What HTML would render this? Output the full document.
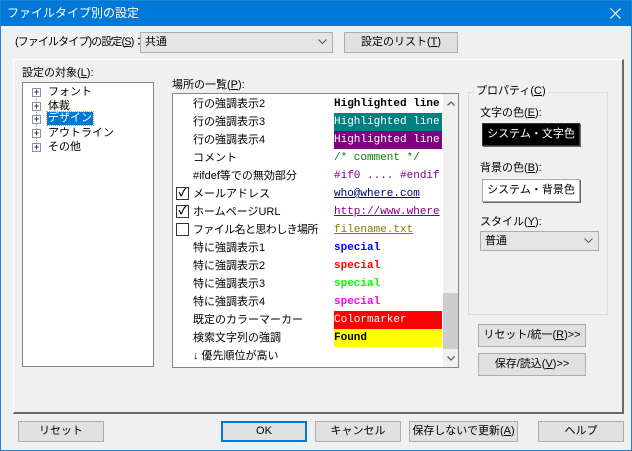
<!DOCTYPE html>
<html><head><meta charset="utf-8"><style>
*{box-sizing:border-box;margin:0;padding:0}
body{width:632px;height:451px;overflow:hidden;background:#f0f0f0;font-family:"Liberation Sans","Noto Sans CJK JP",sans-serif;font-size:11px;color:#000;position:relative}
.a{position:absolute;white-space:nowrap;line-height:14px}
.win{position:absolute;left:0;top:0;width:632px;height:451px;border:1px solid #1883d7}
.title{position:absolute;left:0;top:0;width:632px;height:26px;background:#0078d7;color:#fff;font-size:12px;line-height:26px;padding-left:7px}
.btn{position:absolute;background:#e1e1e1;border:1px solid #adadad;text-align:center;font-size:11px;white-space:nowrap;overflow:hidden}
.cb{position:absolute;width:13px;height:13px;border:1px solid #333;background:#fff;font-size:11px;line-height:11px;text-align:center;font-weight:bold}
.mono{font-family:"Liberation Mono",monospace;font-size:11px}
.pl{position:absolute;width:9px;height:9px;border:1px solid #919191;background:#fff;font-size:9px;line-height:7px;text-align:center;color:#1a3e8c;font-weight:bold}
.chev{position:absolute;right:5px;top:6px}
</style></head><body>
<div class="title">ファイルタイプ別の設定</div>
<svg style="position:absolute;left:610px;top:8px" width="11" height="11"><path d="M0.5 0.5L10.5 10.5M10.5 0.5L0.5 10.5" stroke="#fff" stroke-width="1.2"/></svg>
<div class="win"></div>

<div class="a" style="left:15px;top:35px;letter-spacing:-0.9px">(ファイルタイプ)の設定(<u>S</u>)：</div>
<div class="btn" style="left:140px;top:32px;width:193px;height:21px;background:#e5e5e5;text-align:left;padding-left:4px;line-height:19px">共通<svg class="chev" width="9" height="6"><path d="M0.5 0.5L4.5 4.5L8.5 0.5" fill="none" stroke="#555"/></svg></div>
<div class="btn" style="left:344px;top:32px;width:114px;height:21px;line-height:19px">設定のリスト(<u>T</u>)</div>

<div style="position:absolute;left:13px;top:59px;width:611px;height:355px;border-top:1px solid #fff;border-left:1px solid #fff;border-right:2px solid #696969;border-bottom:2px solid #696969"></div>

<div class="a" style="left:22px;top:66px">設定の対象(<u>L</u>):</div>
<div style="position:absolute;left:22px;top:82px;width:132px;height:285px;background:#fff;border:1px solid #828790"></div>
<div style="position:absolute;left:36px;top:95px;height:52px;border-left:1px dotted #a0a0a0"></div>
<div class="pl" style="left:32px;top:88px">+</div><div class="a" style="left:48px;top:85px">フォント</div>
<div class="pl" style="left:32px;top:102px">+</div><div class="a" style="left:48px;top:99px">体裁</div>
<div class="pl" style="left:32px;top:115px">+</div><div class="a" style="left:47px;top:112px;background:#0078d7;color:#fff;outline:1px dotted #f90;padding:0 1px;line-height:13px">デザイン</div>
<div class="pl" style="left:32px;top:129px">+</div><div class="a" style="left:48px;top:126px">アウトライン</div>
<div class="pl" style="left:32px;top:143px">+</div><div class="a" style="left:48px;top:140px">その他</div>

<div class="a" style="left:172px;top:78px">場所の一覧(<u>P</u>):</div>
<div style="position:absolute;left:172px;top:93px;width:287px;height:275px;background:#fff;border:1px solid #828790"></div>
<div style="position:absolute;left:443px;top:94px;width:15px;height:273px;background:#f0f0f0"></div>
<div style="position:absolute;left:443px;top:293px;width:15px;height:56px;background:#cdcdcd"></div>
<svg style="position:absolute;left:447px;top:101px" width="8" height="5"><path d="M0.5 4.5L4 1L7.5 4.5" fill="none" stroke="#606060" stroke-width="1.3"/></svg>
<svg style="position:absolute;left:447px;top:356px" width="8" height="5"><path d="M0.5 0.5L4 4L7.5 0.5" fill="none" stroke="#606060" stroke-width="1.3"/></svg>

<div class="a" style="left:193px;top:97px">行の強調表示2</div><div class="a mono" style="left:334px;top:97px;font-weight:bold">Highlighted line</div>
<div class="a" style="left:193px;top:115px">行の強調表示3</div><div class="a mono" style="left:334px;top:113px;width:108px;height:18px;line-height:18px;background:#008080;color:#fff;overflow:hidden">Highlighted line</div>
<div class="a" style="left:193px;top:133px">行の強調表示4</div><div class="a mono" style="left:334px;top:131px;width:108px;height:18px;line-height:18px;background:#800080;color:#fff;overflow:hidden">Highlighted line</div>
<div class="a" style="left:193px;top:151px">コメント</div><div class="a mono" style="left:334px;top:151px;color:#008000">/* comment */</div>
<div class="a" style="left:193px;top:169px">#ifdef等での無効部分</div><div class="a mono" style="left:334px;top:169px;color:#800080">#if0 .... #endif</div>
<div class="cb" style="left:176px;top:187px">✓</div><div class="a" style="left:193px;top:187px">メールアドレス</div><div class="a mono" style="left:334px;top:187px;color:#000080;text-decoration:underline">who@where.com</div>
<div class="cb" style="left:176px;top:205px">✓</div><div class="a" style="left:193px;top:205px">ホームページURL</div><div class="a mono" style="left:334px;top:205px;color:#800080;text-decoration:underline">http://www.where</div>
<div class="cb" style="left:176px;top:223px"></div><div class="a" style="left:193px;top:223px;letter-spacing:-0.6px">ファイル名と思わしき場所</div><div class="a mono" style="left:334px;top:223px;color:#808000;text-decoration:underline">filename.txt</div>
<div class="a" style="left:193px;top:241px">特に強調表示1</div><div class="a mono" style="left:334px;top:241px;color:#0000ff;font-weight:bold">special</div>
<div class="a" style="left:193px;top:259px">特に強調表示2</div><div class="a mono" style="left:334px;top:259px;color:#ff0000;font-weight:bold">special</div>
<div class="a" style="left:193px;top:277px">特に強調表示3</div><div class="a mono" style="left:334px;top:277px;color:#00ff00;font-weight:bold">special</div>
<div class="a" style="left:193px;top:295px">特に強調表示4</div><div class="a mono" style="left:334px;top:295px;color:#ff00ff;font-weight:bold">special</div>
<div class="a" style="left:193px;top:313px">既定のカラーマーカー</div><div class="a mono" style="left:334px;top:311px;width:108px;height:18px;line-height:18px;background:#ff0000;color:#fff">Colormarker</div>
<div class="a" style="left:193px;top:331px">検索文字列の強調</div><div class="a mono" style="left:334px;top:329px;width:108px;height:18px;line-height:18px;background:#ffff00;font-weight:bold">Found</div>
<div class="a" style="left:193px;top:349px">↓ 優先順位が高い</div>

<div style="position:absolute;left:468px;top:92px;width:140px;height:223px;border:1px solid #dcdcdc"></div>
<div class="a" style="left:474px;top:84px;background:#f0f0f0;padding:0 2px">プロパティ(<u>C</u>)</div>
<div class="a" style="left:480px;top:106px">文字の色(<u>E</u>):</div>
<div class="btn" style="left:482px;top:123px;width:98px;height:23px;background:#000;color:#fff;line-height:21px;border:1px solid #333;box-shadow:1px 1px 0 #696969">システム・文字色</div>
<div class="a" style="left:480px;top:161px">背景の色(<u>B</u>):</div>
<div class="btn" style="left:482px;top:179px;width:98px;height:23px;background:#fff;line-height:21px;border:1px solid #aaa;box-shadow:1px 1px 0 #696969">システム・背景色</div>
<div class="a" style="left:480px;top:215px">スタイル(<u>Y</u>):</div>
<div class="btn" style="left:480px;top:231px;width:119px;height:20px;text-align:left;padding-left:4px;line-height:18px;background:#e5e5e5">普通<svg class="chev" width="9" height="6"><path d="M0.5 0.5L4.5 4.5L8.5 0.5" fill="none" stroke="#555"/></svg></div>
<div class="btn" style="left:478px;top:324px;width:108px;height:23px;line-height:21px">リセット/統一(<u>R</u>)&gt;&gt;</div>
<div class="btn" style="left:478px;top:353px;width:108px;height:23px;line-height:21px">保存/読込(<u>V</u>)&gt;&gt;</div>

<div class="btn" style="left:18px;top:421px;width:86px;height:21px;line-height:19px">リセット</div>
<div class="btn" style="left:221px;top:421px;width:86px;height:21px;line-height:17px;border:2px solid #0078d7">OK</div>
<div class="btn" style="left:315px;top:421px;width:86px;height:21px;line-height:19px">キャンセル</div>
<div class="btn" style="left:409px;top:421px;width:109px;height:21px;line-height:19px">保存しないで更新(<u>A</u>)</div>
<div class="btn" style="left:538px;top:421px;width:86px;height:21px;line-height:19px">ヘルプ</div>
</body></html>
